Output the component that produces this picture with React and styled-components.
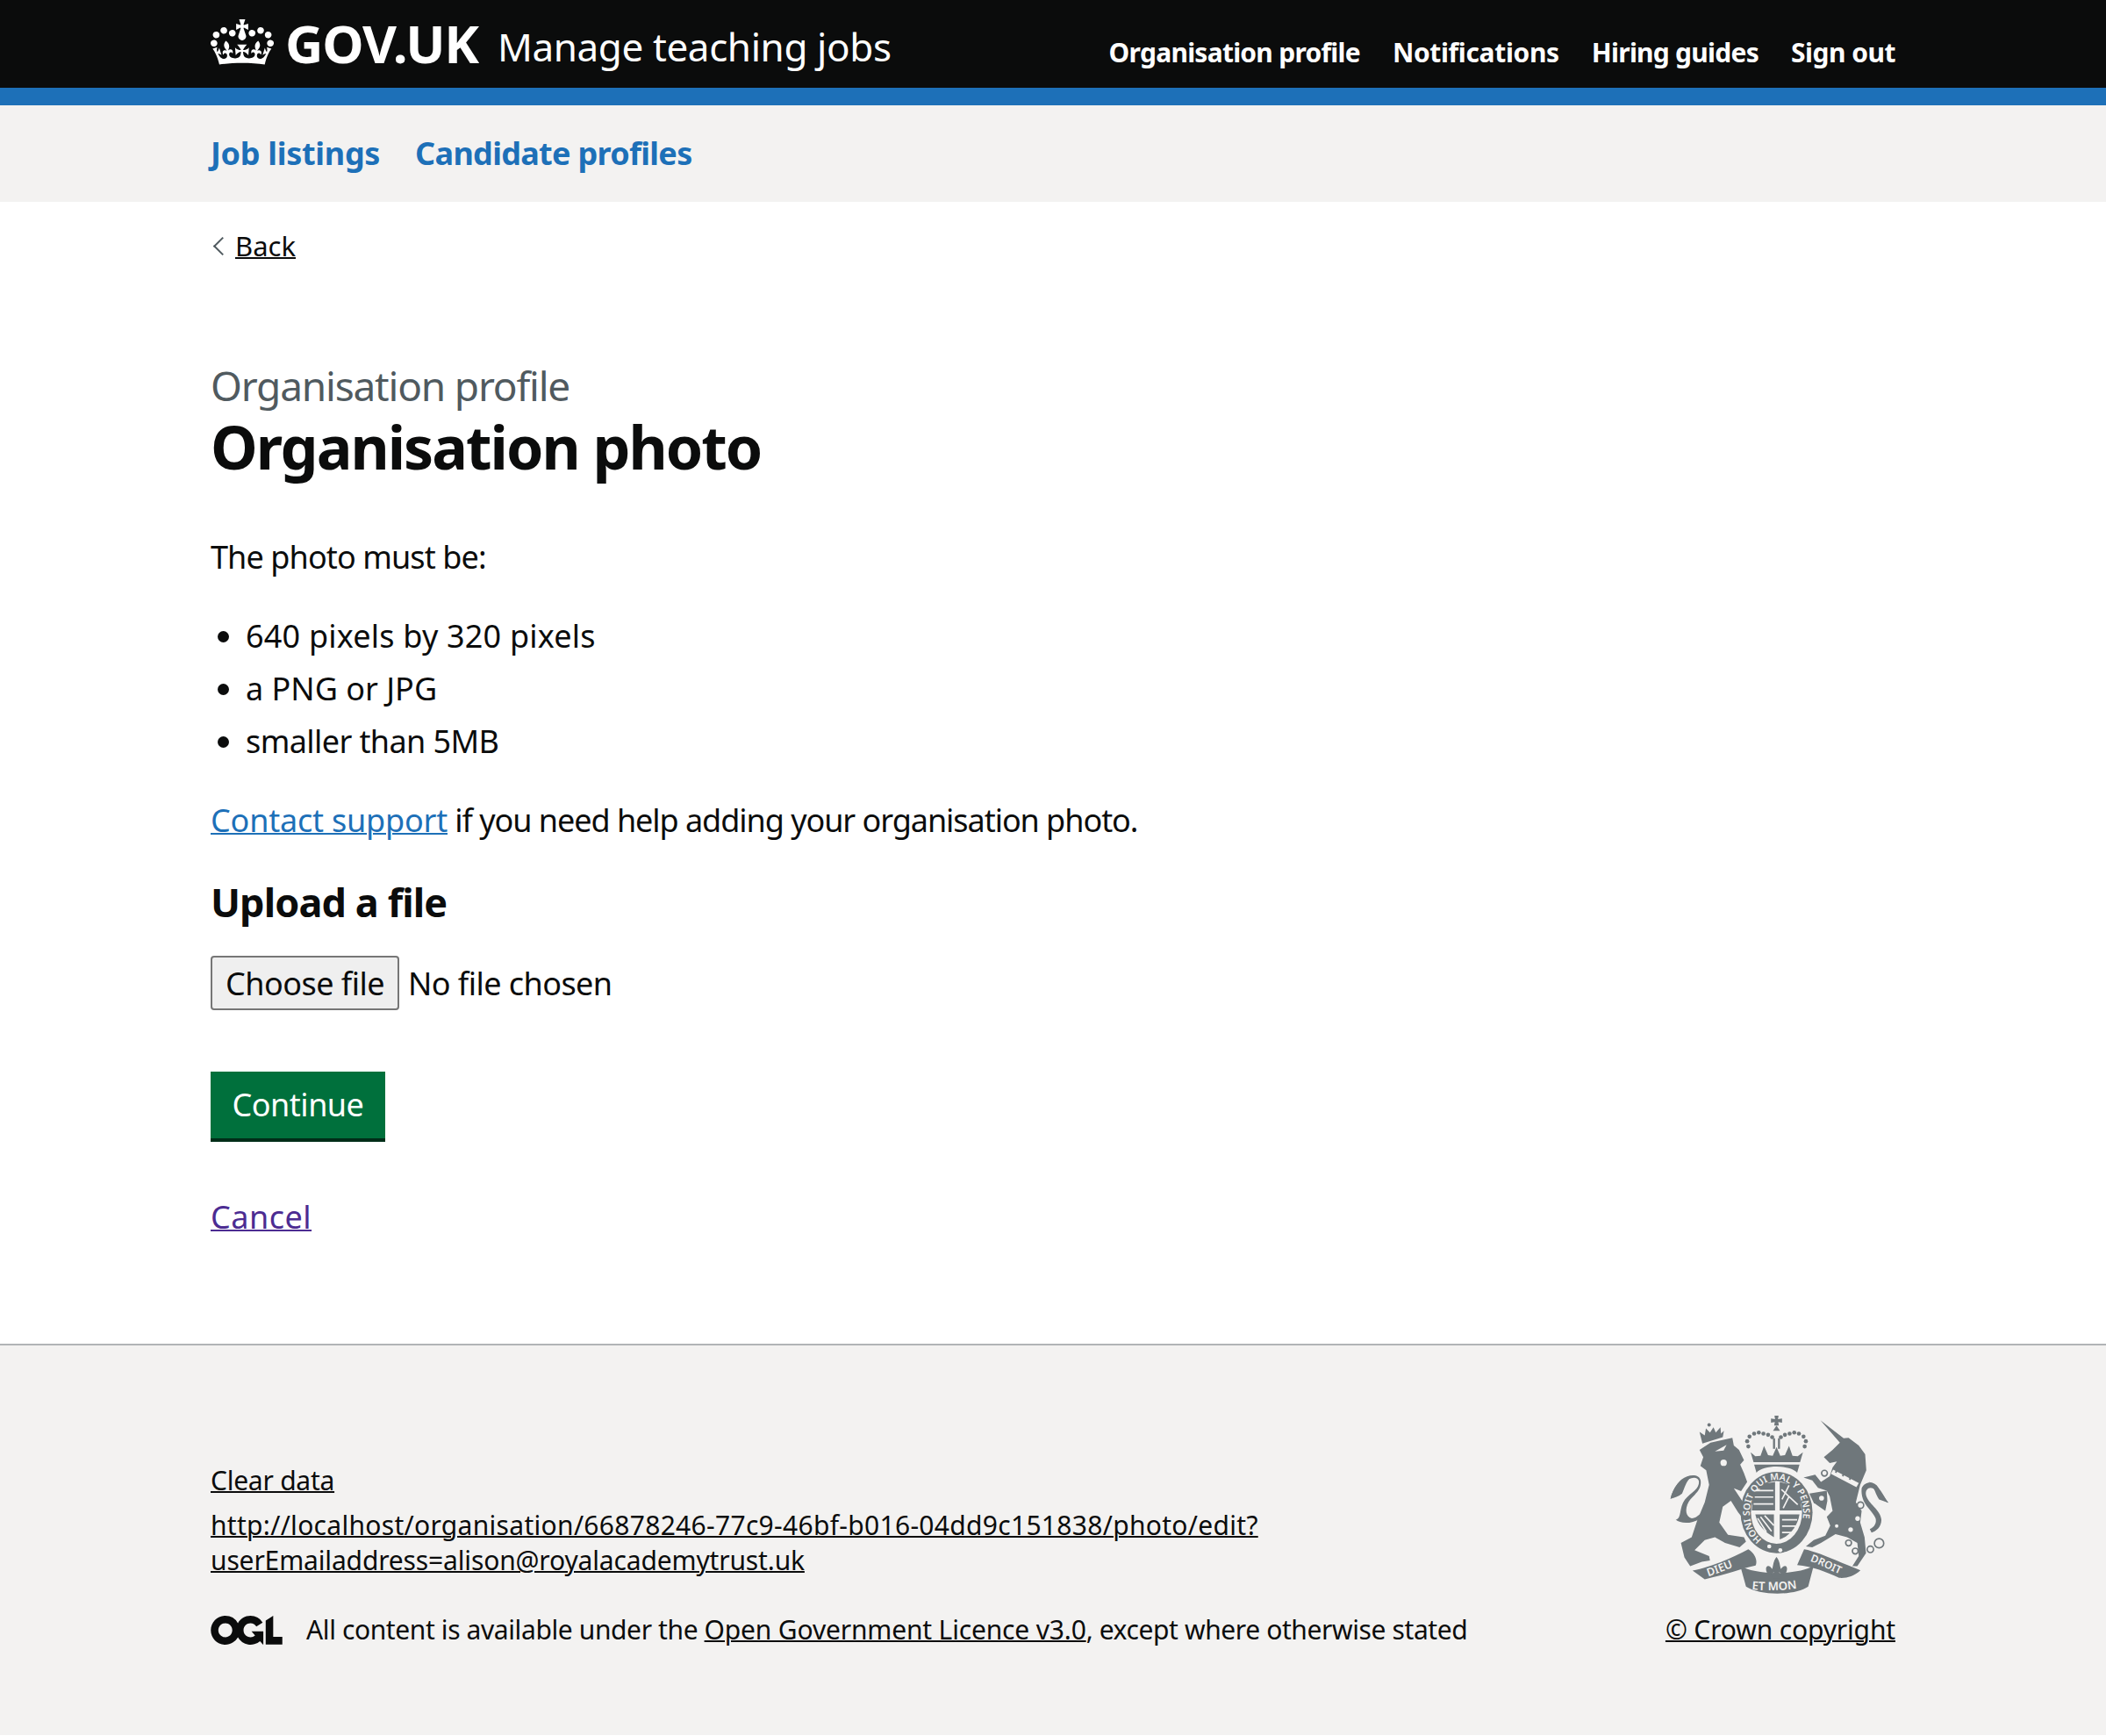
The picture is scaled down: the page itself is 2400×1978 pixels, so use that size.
import React from "react";
import styled, { createGlobalStyle } from "styled-components";

const Crown = () => (
  <svg width="72" height="52" viewBox="0 0 132 97" preserveAspectRatio="none" aria-hidden="true">
    <path
      fill="currentColor"
      fillRule="evenodd"
      d="M25 30.2c3.5 1.5 7.7-.2 9.1-3.7 1.5-3.6-.2-7.8-3.9-9.2-3.6-1.4-7.6.3-9.1 3.9-1.4 3.5.3 7.5 3.9 9zM9 39.5c3.6 1.5 7.8-.2 9.2-3.7 1.5-3.6-.2-7.8-3.9-9.1-3.6-1.5-7.6.2-9.1 3.8-1.4 3.5.3 7.5 3.8 9zM4.4 57.2c3.5 1.5 7.7-.2 9.1-3.8 1.5-3.6-.2-7.7-3.9-9.1-3.5-1.5-7.6.3-9.1 3.8-1.4 3.5.3 7.6 3.9 9.1zm38.3-21.4c3.5 1.5 7.7-.2 9.1-3.8 1.5-3.6-.2-7.7-3.9-9.1-3.6-1.5-7.6.3-9.1 3.8-1.3 3.6.4 7.7 3.9 9.1zm64.4-5.6c-3.6 1.5-7.8-.2-9.1-3.7-1.5-3.6.2-7.8 3.8-9.2 3.6-1.4 7.7.3 9.2 3.9 1.3 3.5-.4 7.5-3.9 9zm15.9 9.3c-3.6 1.5-7.7-.2-9.1-3.7-1.5-3.6.2-7.8 3.7-9.1 3.6-1.5 7.7.2 9.2 3.8 1.5 3.5-.3 7.5-3.8 9zm4.7 17.7c-3.6 1.5-7.8-.2-9.2-3.8-1.5-3.6.2-7.7 3.9-9.1 3.6-1.5 7.7.3 9.2 3.8 1.3 3.5-.4 7.6-3.9 9.1zM89.3 35.8c-3.6 1.5-7.8-.2-9.2-3.8-1.4-3.6.2-7.7 3.9-9.1 3.6-1.5 7.7.3 9.2 3.8 1.4 3.6-.3 7.7-3.9 9.1zM69.7 17.7l8.9 4.7V9.3l-8.9 2.8c-.2-.3-.5-.6-.9-.9L72.4 0H59.6l3.5 11.2c-.3.3-.6.5-.9.9l-8.8-2.8v13.1l8.8-4.7c.3.3.6.7.9.9l-5 15.4v.1c-.2.8-.4 1.6-.4 2.4 0 4.1 3.1 7.5 7 8.1h.2c.3 0 .7.1 1 .1.4 0 .7 0 1-.1h.2c4-.6 7.1-4.1 7.1-8.1 0-.8-.1-1.7-.4-2.4V34l-5.1-15.4c.4-.2.7-.6 1-.9zM66 92.8c16.9 0 32.8 1.1 47.1 3.2 4-16.9 8.9-26.7 14-33.5l-9.6-3.4c1 4.9 1.1 7.2 0 10.2-1.5-1.4-3-4.3-4.2-8.7L108.6 76c2.8-2 5-3.2 7.5-3.3-4.4 9.4-10 11.9-13.6 11.2-4.3-.8-6.3-4.6-5.6-7.9 1-4.7 5.7-5.9 8-.5 4.3-8.7-3-11.4-7.6-8.8 7.1-7.2 7.9-13.5 2.1-21.1-8 6.1-8.1 12.3-4.5 20.8-4.7-5.4-12.1-2.5-9.5 6.2 3.4-5.2 7.9-2 7.2 3.1-.6 4.3-6.4 7.8-13.5 7.2-10.3-.9-10.9-8-11.2-13.8 2.5-.5 7.1 1.8 11 7.3L80.2 60c-4.1 4.4-8 5.3-12.3 5.4 1.4-4.4 8-11.6 8-11.6H55.5s6.4 7.2 7.9 11.6c-4.2-.1-8-1-12.3-5.4l1.4 16.4c3.9-5.5 8.5-7.7 10.9-7.3-.3 5.8-.9 12.8-11.1 13.8-7.2.6-12.9-2.9-13.5-7.2-.7-5 3.8-8.3 7.1-3.1 2.7-8.7-4.6-11.6-9.4-6.2 3.7-8.5 3.6-14.7-4.6-20.8-5.8 7.6-5 13.9 2.2 21.1-4.7-2.6-11.9.1-7.7 8.8 2.3-5.5 7.1-4.2 8.1.5.7 3.3-1.3 7.1-5.7 7.9-3.5.7-9-1.8-13.5-11.2 2.5.1 4.7 1.3 7.5 3.3l-4.7-15.4c-1.2 4.4-2.7 7.2-4.3 8.7-1.1-3-.9-5.3 0-10.2l-9.5 3.4c5 6.9 9.9 16.7 14 33.5 14.8-2.1 30.8-3.2 47.7-3.2z"
    />
  </svg>
);

const OglLogo = () => (
  <svg width="82" height="33" viewBox="0 0 483.2 195.7" aria-hidden="true">
    <path
      fill="currentColor"
      d="M421.5 142.8V.1l-50.7 32.3v161.1h112.4v-50.7zm-122.3-9.6A47.12 47.12 0 0 1 221 97.8c0-26 21.1-47.1 47.1-47.1 16.7 0 31.4 8.7 39.7 21.8l42.7-27.2A97.63 97.63 0 0 0 268.1 0c-36.5 0-68.3 20.1-85.1 49.7A98 98 0 0 0 97.8 0C43.9 0 0 43.9 0 97.8s43.9 97.8 97.8 97.8c36.5 0 68.3-20.1 85.1-49.7a97.76 97.76 0 0 0 149.6 25.4l19.4 22.2h3v-87.8h-80l24.3 27.5zM97.8 145c-26 0-47.1-21.1-47.1-47.1s21.1-47.1 47.1-47.1 47.2 21 47.2 47S123.8 145 97.8 145"
    />
  </svg>
);

// Royal coat of arms, drawn on the coordinates of a 3x crop
const dots = [
  [400, 178], [396, 160], [404, 144], [420, 134], [436, 130], [452, 134], [468, 138], [482, 146],
  [594, 178], [598, 160], [590, 144], [574, 134], [558, 130], [542, 134], [526, 138], [512, 146],
];
const rings = [
  [662, 270, 10], [652, 356, 11], [786, 380, 11], [745, 510, 10], [768, 538, 10], [820, 532, 11], [850, 511, 16],
];
const spots = [[776, 426, 8], [752, 464, 8], [704, 452, 6]];

const CoatOfArms = () => (
  <svg width="250" height="204" viewBox="130 72 755 616" aria-hidden="true">
    <g fill="#6f777b" stroke="none">
      {/* lion */}
      <path d="M232 190 L270 165 L345 148 L350 175 L368 190 L385 225 L372 240 L385 270 L396 300 L375 332 L350 322 L385 375 L406 410 L385 430 L365 405 L340 365 L312 385 L300 440 L330 482 L385 490 L392 505 L370 525 L320 510 L285 490 L250 500 L215 535 L265 555 L268 570 L240 575 L200 590 L180 560 L168 510 L205 490 L225 430 L250 370 L265 310 L255 260 L235 245 L245 215 Z" />
      <path d="M235 425 C200 448 165 442 150 430 C172 425 160 390 182 360 C205 335 232 325 230 298 C226 278 195 284 180 302 C168 322 152 345 132 358 C138 335 150 310 170 292 C195 272 232 272 236 296 C240 330 210 345 195 368 C180 395 185 420 205 425 C220 425 228 415 240 405 Z" />
      <path d="M132 358 C140 320 165 285 205 280 C184 300 180 322 172 340 C160 350 146 355 132 358 Z" />
      <path d="M242 168 L232 128 L250 140 L254 116 L268 130 L280 112 L288 130 L304 112 L306 134 L316 124 L312 146 Z" />
      <circle cx="265" cy="104" r="6" />
      {/* unicorn */}
      <path d="M648 88 L728 150 L745 148 L780 175 L802 205 L806 260 L785 310 L770 370 L790 400 L785 440 L800 490 L805 545 L775 590 L758 590 L780 555 L775 510 L740 490 L700 480 L650 510 L620 525 L598 522 L625 500 L665 485 L682 450 L670 420 L690 400 L680 350 L670 330 L640 320 L620 295 L590 285 L630 275 L650 300 L680 280 L690 250 L705 230 L680 235 L660 215 L690 190 L715 165 Z" />
      <path d="M610 340 L670 330 L672 365 L665 400 L625 372 Z" />
      <path d="M790 322 C800 296 835 296 848 320 C858 340 870 355 882 372 C858 362 848 348 838 330 C825 312 800 320 805 345 C812 375 855 395 858 430 C858 455 840 470 824 474 L818 462 C835 455 842 440 838 425 C825 395 785 375 790 322 Z" />
      <path d="M882 372 C862 345 852 310 815 300 C836 320 838 345 850 360 Z" />
      {/* crown */}
      <path d="M490 72 H504 L502 84 L516 82 V96 L503 94 L505 106 H489 L491 94 L478 96 V82 L492 84 Z" />
      <path d="M497 106 L509 124 H485 Z" />
      <rect x="485" y="150" width="7" height="36" />
      <rect x="502" y="150" width="7" height="36" />
      <path d="M408 198 L424 212 L442 210 L454 176 L468 208 L484 210 L497 180 L510 210 L526 208 L540 176 L552 210 L570 212 L588 198 L578 232 H418 Z" />
      <path d="M420 240 H576 L568 268 C545 240 450 240 428 268 Z" />
      {dots.map(([cx, cy]) => <circle key={cx + "-" + cy} cx={cx} cy={cy} r="7" />)}
      {/* garter */}
      <ellipse cx="497" cy="405" rx="124" ry="140" />
      {/* ribbons */}
      <path d="M208 605 C262 596 345 562 400 532 C425 548 432 572 425 588 C385 596 320 620 250 635 Z" />
      <path d="M372 588 C420 622 575 622 625 588 L606 660 C560 692 440 692 392 660 Z" />
      <path d="M592 532 C640 540 722 580 786 604 C762 625 738 632 712 630 C670 610 620 590 568 586 Z" />
      {/* fleur */}
      <path d="M497 558 C510 575 508 590 512 600 C525 580 540 590 530 612 C522 620 512 615 506 610 L510 632 H484 L488 610 C482 615 472 620 464 612 C454 590 470 580 482 600 C486 590 484 575 497 558 Z" />
    </g>
    <g fill="#f3f2f1">
      <ellipse cx="497" cy="405" rx="88" ry="108" />
      <circle cx="315" cy="234" r="11" />
      <path d="M285 195 L325 172 L315 192 Z" />
      <path d="M692 258 L780 304 L772 318 L684 272 Z" />
      {spots.map(([cx, cy, r]) => <circle key={cx} cx={cx} cy={cy} r={r} />)}
      <circle cx="472" cy="522" r="7" />
      <circle cx="510" cy="535" r="7" />
    </g>
    <g fill="#6f777b">
      <path d="M418 312 L492 300 V398 H412 Z" />
      <path d="M508 300 L572 316 L584 398 H508 Z" />
      <path d="M424 412 H488 V490 C460 475 432 450 424 412 Z" />
      <path d="M508 412 H576 C570 450 545 485 508 498 Z" />
    </g>
    <g fill="none" stroke="#f3f2f1" strokeWidth="5">
      <path d="M424 330 H486 M422 352 H486 M418 376 H486" />
      <path d="M514 326 L570 378 M540 312 L516 360 M540 350 L520 390" />
      <path d="M442 420 L480 470 M432 425 L462 472 M456 416 L488 450" />
      <path d="M516 430 H568 M516 452 H564 M516 474 H548" />
    </g>
    <g fill="none" stroke="#6f777b">
      <path strokeWidth="6" d="M700 268 L712 252 M724 280 L736 264 M748 292 L760 276" />
      {rings.map(([cx, cy, r]) => <circle key={cx} cx={cx} cy={cy} r={r} strokeWidth="5" fill="#f3f2f1" />)}
    </g>
    <defs>
      <path id="garterRing" d="M447 499 A92 112 0 1 1 547 499" />
      <path id="ribbonLeft" d="M262 625 C310 610 350 590 385 578" />
      <path id="ribbonMid" d="M412 670 C450 675 540 675 585 662" />
      <path id="ribbonRight" d="M612 572 C650 586 690 608 735 626" />
    </defs>
    <CrestText $size={32}><textPath href="#garterRing">HONI SOIT QUI MAL Y PENSE</textPath></CrestText>
    <CrestText $size={38}><textPath href="#ribbonLeft">DIEU</textPath></CrestText>
    <CrestText $size={40}><textPath href="#ribbonMid">ET MON</textPath></CrestText>
    <CrestText $size={36}><textPath href="#ribbonRight">DROIT</textPath></CrestText>
  </svg>
);

const App = () => {
  return (
    <>
      <GlobalStyle />
      <Header>
        <HeaderInner>
          <Brand>
            <Crown />
            <Logotype>GOV.UK</Logotype>
            <ServiceName>Manage teaching jobs</ServiceName>
          </Brand>
          <HeaderNav>
            <HeaderLink href="#" $spacing={-0.75}>Organisation profile</HeaderLink>
            <HeaderLink href="#" $spacing={-0.35}>Notifications</HeaderLink>
            <HeaderLink href="#" $spacing={-0.75}>Hiring guides</HeaderLink>
            <HeaderLink href="#" $spacing={-0.5}>Sign out</HeaderLink>
          </HeaderNav>
        </HeaderInner>
      </Header>
      <SubNav>
        <Container>
          <SubNavList>
            <SubNavLink href="#" $spacing={-0.3}>Job listings</SubNavLink>
            <SubNavLink href="#" $spacing={-0.7}>Candidate profiles</SubNavLink>
          </SubNavList>
        </Container>
      </SubNav>
      <Container>
        <BackLink href="#">Back</BackLink>
        <Main>
          <Caption>Organisation profile</Caption>
          <Title>Organisation photo</Title>
          <Body $spacing={-0.9}>The photo must be:</Body>
          <BulletList>
            <Bullet $spacing={0.2}>640 pixels by 320 pixels</Bullet>
            <Bullet $spacing={0}>a PNG or JPG</Bullet>
            <Bullet $spacing={-0.6}>smaller than 5MB</Bullet>
          </BulletList>
          <Body $spacing={-1.05}>
            <TextLink href="#">Contact support</TextLink> if you need help adding your organisation photo.
          </Body>
          <Label>Upload a file</Label>
          <FileRow>
            <FileButton type="button">Choose file</FileButton>
            <FileStatus>No file chosen</FileStatus>
          </FileRow>
          <ContinueButton type="button">Continue</ContinueButton>
          <CancelLink href="#">Cancel</CancelLink>
        </Main>
      </Container>
      <Footer>
        <FooterInner>
          <FooterLeft>
            <ClearRow>
              <FooterLink href="#">Clear data</FooterLink>
            </ClearRow>
            <FooterUrl>
              <UrlLine $spacing={0.3}>
                <FooterLink href="#">http://localhost/organisation/66878246-77c9-46bf-b016-04dd9c151838/photo/edit?</FooterLink>
              </UrlLine>
              <UrlLine $spacing={-0.15}>
                <FooterLink href="#">userEmailaddress=alison@royalacademytrust.uk</FooterLink>
              </UrlLine>
            </FooterUrl>
            <LicenceRow>
              <OglLogo />
              <LicenceText>
                All content is available under the <LicenceLink href="#">Open Government Licence v3.0</LicenceLink>, except where otherwise stated
              </LicenceText>
            </LicenceRow>
          </FooterLeft>
          <FooterRight>
            <CoatOfArms />
            <CopyrightLink href="#">© Crown copyright</CopyrightLink>
          </FooterRight>
        </FooterInner>
      </Footer>
    </>
  );
};

const font = `"Noto Sans", "Open Sans", Arial, sans-serif`;

const GlobalStyle = createGlobalStyle`
  html, body {
    margin: 0;
    padding: 0;
    background: #fff;
    color: #0b0c0c;
    font-family: ${font};
  }
`;

const Container = styled.div`
  width: 1920px;
  margin: 0 auto;
`;

const Header = styled.header`
  background: #0b0c0c;
  border-bottom: 20px solid #1d70b8;
  color: #fff;
  height: 100px;
`;

const HeaderInner = styled(Container)`
  display: flex;
  justify-content: space-between;
  height: 100%;
`;

const Brand = styled.div`
  display: flex;
  align-items: flex-start;
  padding-top: 21px;

  > svg {
    flex: none;
    margin-top: 1px;
  }
`;

const Logotype = styled.span`
  font-size: 60px;
  font-weight: 700;
  line-height: 56px;
  margin-left: 13px;
  letter-spacing: -1.2px;
`;

const ServiceName = styled.span`
  font-size: 44px;
  line-height: 64px;
  margin-left: 22px;
  letter-spacing: -0.4px;
`;

const HeaderNav = styled.nav`
  display: flex;
  gap: 37px;
  padding-top: 37px;
`;

const HeaderLink = styled.a`
  color: #fff;
  font-size: 30px;
  font-weight: 700;
  line-height: 46px;
  letter-spacing: ${(props) => props.$spacing}px;
  text-decoration: none;
`;

const SubNav = styled.nav`
  background: #f3f2f1;
  height: 110px;
`;

const SubNavList = styled.div`
  display: flex;
  gap: 40px;
  padding-top: 32px;
`;

const SubNavLink = styled.a`
  color: #1d70b8;
  font-size: 36px;
  font-weight: 700;
  line-height: 46px;
  letter-spacing: ${(props) => props.$spacing}px;
  text-decoration: none;
`;

const BackLink = styled.a`
  display: block;
  width: fit-content;
  position: relative;
  margin-top: 30px;
  padding-left: 28px;
  color: #0b0c0c;
  font-size: 31px;
  line-height: 40px;
  text-decoration: underline;
  text-decoration-thickness: 2px;

  &::before {
    content: "";
    position: absolute;
    left: 6px;
    top: 13px;
    width: 13px;
    height: 13px;
    border-left: 2px solid #505a5f;
    border-bottom: 2px solid #505a5f;
    transform: rotate(45deg);
  }
`;

const Main = styled.main`
  display: flex;
  flex-direction: column;
  align-items: flex-start;
  padding: 109px 0 119px;
`;

const Caption = styled.span`
  color: #505a5f;
  font-size: 46px;
  line-height: 60px;
  letter-spacing: -1.2px;
`;

const Title = styled.h1`
  margin: 0 0 61px;
  font-size: 68px;
  font-weight: 700;
  line-height: 80px;
  letter-spacing: -1.95px;
`;

const Body = styled.p`
  margin: 0 0 40px;
  font-size: 36px;
  line-height: 50px;
  letter-spacing: ${(props) => props.$spacing}px;
`;

const BulletList = styled.ul`
  margin: 0 0 40px;
  padding-left: 40px;
  font-size: 36px;
  line-height: 50px;
`;

const Bullet = styled.li`
  margin-bottom: 10px;
  letter-spacing: ${(props) => props.$spacing}px;

  &:last-child {
    margin-bottom: 0;
  }
`;

const TextLink = styled.a`
  color: #1d70b8;
  letter-spacing: -0.2px;
  text-decoration: underline;
  text-decoration-thickness: 2px;
`;

const Label = styled.label`
  display: block;
  margin-bottom: 34px;
  font-size: 45px;
  font-weight: 700;
  line-height: 55px;
  letter-spacing: -0.9px;
`;

const FileRow = styled.div`
  display: flex;
  align-items: center;
  gap: 10px;
  margin-bottom: 70px;
`;

const FileButton = styled.button`
  box-sizing: border-box;
  width: 215px;
  height: 62px;
  padding: 0;
  border: 2px solid #767676;
  border-radius: 4px;
  background: #efefef;
  color: #0b0c0c;
  font-family: ${font};
  font-size: 36px;
  letter-spacing: -0.5px;
`;

const FileStatus = styled.span`
  font-size: 36px;
  letter-spacing: -0.55px;
`;

const ContinueButton = styled.button`
  box-sizing: border-box;
  display: block;
  width: 199px;
  height: 80px;
  margin: 0 0 61px;
  padding: 0 0 4px;
  border: 0;
  border-radius: 0;
  box-shadow: inset 0 -4px 0 #002d18;
  background: #00703c;
  color: #fff;
  font-family: ${font};
  font-size: 36px;
  line-height: 50px;
  letter-spacing: -0.5px;
`;

const CancelLink = styled.a`
  color: #4c2c92;
  font-size: 36px;
  line-height: 50px;
  letter-spacing: 0.5px;
  text-decoration: underline;
  text-decoration-thickness: 2px;
`;

const Footer = styled.footer`
  background: #f3f2f1;
  border-top: 2px solid #b1b4b6;
  height: 444px;
  color: #0b0c0c;
`;

const FooterInner = styled(Container)`
  display: flex;
  justify-content: space-between;
  align-items: flex-start;
`;

const FooterLeft = styled.div`
  display: flex;
  flex-direction: column;
  padding-top: 134px;
  font-size: 30px;
  line-height: 40px;
`;

const ClearRow = styled.div`
  margin-bottom: 11px;
  letter-spacing: -0.25px;
`;

const FooterUrl = styled.div`
  margin-bottom: 39px;
`;

const UrlLine = styled.div`
  letter-spacing: ${(props) => props.$spacing}px;
`;

const FooterLink = styled.a`
  color: #0b0c0c;
  text-decoration: underline;
  text-decoration-thickness: 2px;
`;

const LicenceRow = styled.div`
  display: flex;
  align-items: center;
  gap: 27px;
`;

const LicenceText = styled.span`
  letter-spacing: -0.39px;
`;

const LicenceLink = styled(FooterLink)`
  letter-spacing: -0.17px;
`;

const FooterRight = styled.div`
  display: flex;
  flex-direction: column;
  align-items: flex-end;
  gap: 19px;
  padding-top: 80px;

  > svg {
    margin-right: 7px;
  }
`;

const CopyrightLink = styled(FooterLink)`
  font-size: 30px;
  line-height: 40px;
  margin-top: 1px;
  letter-spacing: -0.15px;
`;

const CrestText = styled.text`
  fill: #f3f2f1;
  font-family: ${font};
  font-weight: 600;
  font-size: ${(props) => props.$size}px;
`;

export default App;
